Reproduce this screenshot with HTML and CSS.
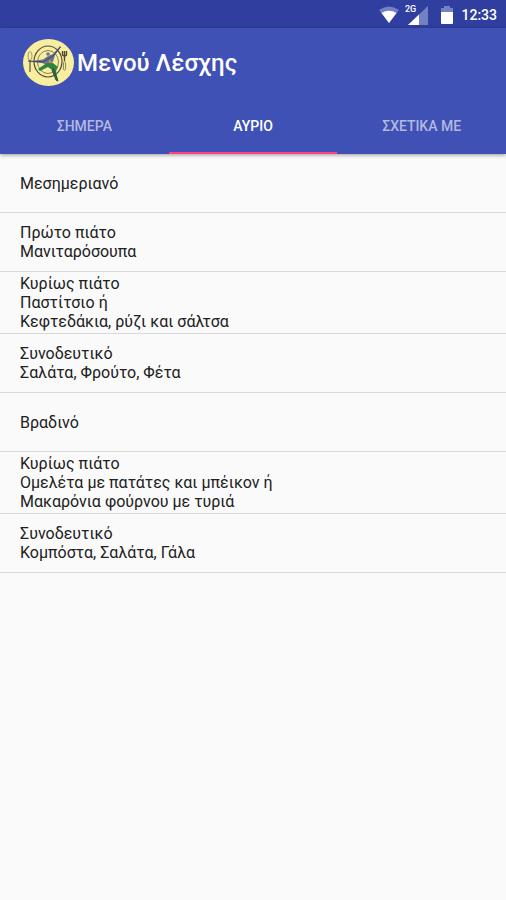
FILE: index.html
```html
<!DOCTYPE html>
<html lang="el">
<head>
<meta charset="utf-8">
<meta name="viewport" content="width=device-width, initial-scale=1">
<title>Μενού Λέσχης</title>
<link rel="stylesheet" href="styles.css">
</head>
<body>
<div class="status">
  <svg class="wifi" width="20" height="18" viewBox="0 0 20 18" aria-hidden="true">
    <path d="M0 4Q10-3 20 4L10 17Z" fill="#7480c4"/>
    <path d="M2.500 7Q10 2.500 17.500 7L10 17Z" fill="#fff"/>
  </svg>
  <svg class="signal" width="24" height="22" viewBox="0 0 24 22" aria-hidden="true">
    <text class="network" x="0" y="8">2G</text>
    <path d="M23 2V21H3Z" fill="#7480c4"/>
    <path d="M14 10.500V21H3Z" fill="#fff"/>
  </svg>
  <svg class="battery" width="12" height="18" viewBox="0 0 12 18" aria-hidden="true">
    <path d="M3 0H9V2H12V7H0V2H3Z" fill="#7480c4"/>
    <path d="M0 6H12V17Q12 18 11 18H1Q0 18 0 17Z" fill="#fff"/>
  </svg>
  <time class="clock">12:33</time>
</div>
<header class="appbar">
  <div class="toolbar">
    <svg class="logo" width="53" height="48" viewBox="0 0 53 48" aria-hidden="true">
      <ellipse cx="26.500" cy="23.500" rx="25.500" ry="23.500" fill="#f9ee9f"/>
      <g fill="none" stroke="#4e4b35">
        <ellipse cx="26" cy="22.500" rx="14" ry="15.500" stroke-width="1.200"/>
        <ellipse cx="26" cy="23" rx="10.500" ry="11.500" stroke="#87825b" stroke-width="1"/>
        <ellipse cx="8" cy="17" rx="2" ry="4.500" stroke="#a19a6c" stroke-width="1"/>
        <path d="M8 21V33" stroke="#77734f" stroke-width="1.500"/>
        <path d="M40.500 12V16Q42.500 18 44.500 16V12M42.500 12V22" stroke-width="1.400"/>
        <ellipse cx="42.500" cy="27" rx="1.200" ry="4.500" stroke="#8b865c" stroke-width="1"/>
      </g>
      <path d="M38 7L39 8L33 16L31 23L26 26L20 24L6 22.500L21 20.500L26 17L31 15Z" fill="#69738e"/>
      <path d="M6 22L21 23L31 17L38.500 8" fill="none" stroke="#3d4558" stroke-width="1"/>
      <circle cx="26" cy="15" r="1.800" fill="#6d7692"/>
      <path d="M24 24.500L31 24L36 28L34 32L36 42L34 41L30 31L26 28L18 32L16 30Z" fill="#2c8443"/>
      <path d="M31 29L36 42L34 41L30 31" fill="none" stroke="#35463c" stroke-width="1"/>
      <circle cx="28" cy="22.500" r="1.300" fill="#d09a35"/>
    </svg>
    <h1 class="title">Μενού Λέσχης</h1>
  </div>
  <nav class="tabs">
    <a class="tab" href="#today">ΣΗΜΕΡΑ</a>
    <a class="tab active" href="#tomorrow" aria-current="page">ΑΥΡΙΟ</a>
    <a class="tab" href="#about">ΣΧΕΤΙΚΑ ΜΕ</a>
  </nav>
</header>
<main>
  <ul class="menu">
    <li class="row">Μεσημεριανό</li>
    <li class="row">Πρώτο πιάτο<br>Μανιταρόσουπα</li>
    <li class="row">Κυρίως πιάτο<br>Παστίτσιο ή<br>Κεφτεδάκια, ρύζι και σάλτσα</li>
    <li class="row">Συνοδευτικό<br>Σαλάτα, Φρούτο, Φέτα</li>
    <li class="row">Βραδινό</li>
    <li class="row">Κυρίως πιάτο<br>Ομελέτα με πατάτες και μπέικον ή<br>Μακαρόνια φούρνου με τυριά</li>
    <li class="row">Συνοδευτικό<br>Κομπόστα, Σαλάτα, Γάλα</li>
  </ul>
</main>
</body>
</html>
```
FILE: styles.css
```css
* {
  box-sizing: border-box;
}

body {
  margin: 0;
  min-height: 100vh;
  background: #fafafa;
  color: #212121;
  font-family: Roboto, "Noto Sans", sans-serif;
  font-size: 16px;
  line-height: 19px;
}

.status {
  display: flex;
  justify-content: flex-end;
  align-items: center;
  height: 28px;
  padding: 2px 9px 0 0;
  background: #303f9f;
  color: #fff;
}

.wifi {
  margin-right: 6px;
}

.signal {
  margin-right: 12px;
}

.network {
  fill: #fff;
  font-size: 9px;
  font-weight: 500;
}

.battery {
  margin-right: 8px;
}

.clock {
  font-size: 14px;
  font-weight: 500;
}

.appbar {
  position: relative;
  background: #3f51b5;
  box-shadow: 0 1px 4px rgba(0, 0, 0, 0.4);
}

.toolbar {
  display: flex;
  align-items: center;
  gap: 2px;
  height: 70px;
  padding-left: 22px;
}

.title {
  margin: 0;
  color: #fff;
  font-size: 24px;
  font-weight: 500;
  line-height: 28px;
}

.tabs {
  display: grid;
  grid-template-columns: repeat(3, 1fr);
  height: 56px;
}

.tab {
  display: flex;
  justify-content: center;
  align-items: center;
  padding-top: 2px;
  border-bottom: 2px solid transparent;
  color: #b2b9e1;
  font-size: 14px;
  font-weight: 500;
  text-decoration: none;
}

.active {
  border-bottom-color: #ff4081;
  color: #fff;
}

.menu {
  margin: 0;
  padding: 0;
  list-style: none;
}

.row {
  display: grid;
  align-content: center;
  min-height: 59px;
  padding: 2px 20px;
  border-bottom: 1px solid #d9d9d9;
}
```
